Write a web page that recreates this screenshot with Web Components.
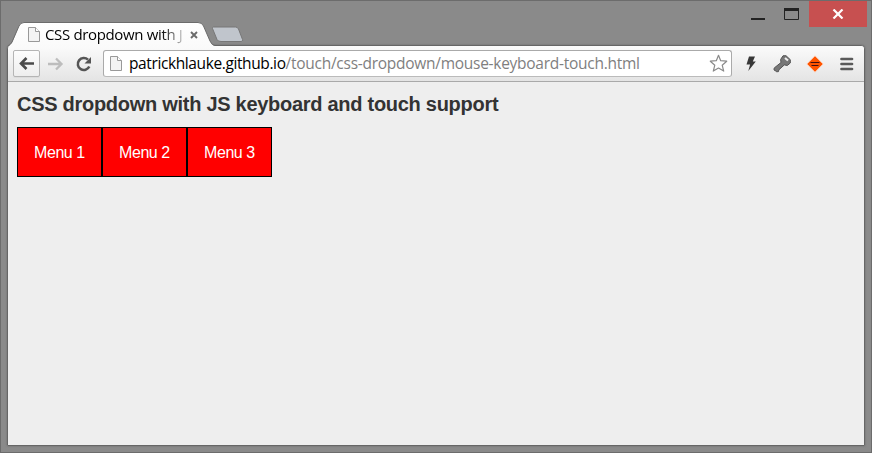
<!DOCTYPE html>
<html lang="en">
<head>
<meta charset="utf-8">
<title>CSS dropdown with JS keyboard and touch support</title>
<style>
html,body{margin:0;height:100%;overflow:hidden}
</style>
</head>
<body>
<browser-window>
  <browser-tab slot="tabs">CSS dropdown with J</browser-tab>
  <window-controls slot="controls"></window-controls>
  <browser-toolbar slot="toolbar"><address-bar slot="address" host="patrickhlauke.github.io" path="/touch/css-dropdown/mouse-keyboard-touch.html"></address-bar></browser-toolbar>
  <demo-page>
    <menu-item>Menu 1</menu-item><menu-item>Menu 2</menu-item><menu-item>Menu 3</menu-item>
  </demo-page>
</browser-window>
<script>
const define = (name, html, init) => {
  const template = document.createElement('template');
  template.innerHTML = html;
  customElements.define(name, class extends HTMLElement {
    constructor() {
      super();
      this.attachShadow({mode: 'open'}).append(template.content.cloneNode(true));
      if (init) init(this);
    }
  });
};
const pageIcon = `<svg width="12" height="15" viewBox="0 0 12 15"><path d="M.5.5h7l4 4v10H.5z" fill="#f3f3f3" stroke="#999"/><path d="M7.5.5v4h4" fill="#fff" stroke="#999"/></svg>`;

define('browser-window', `
<style>
:host{display:flex;flex-direction:column;box-sizing:border-box;width:872px;height:453px;border:1px solid #6c6c6c;background:#8a8a8a;padding:0 7px 7px}
.title{display:flex;height:44px;flex:none;justify-content:space-between;align-items:flex-start;margin-right:-3px}
.frame{flex:1;display:flex;flex-direction:column;box-sizing:border-box;margin:0 -1px;border:1px solid #666;border-radius:4px 4px 1px 1px;box-shadow:0 0 2px #555a;background:#eee;min-height:0;margin-bottom:-1px}
.tabs{display:flex;align-items:flex-start;padding-top:21px;z-index:1}
.new{margin-left:-5px;margin-top:4px}
</style>
<div class="title"><div class="tabs"><slot name="tabs"></slot>
<svg class="new" width="34" height="17" viewBox="0 0 34 17"><path d="M3.5 1h22q2 0 3 2l4 10.500q1 2-1.500 2H11q-3 0-4-2l-4.500-11q-.5-1 1-1.500z" fill="#c0c5cc" stroke="#777"/></svg></div>
<slot name="controls"></slot></div>
<div class="frame"><slot name="toolbar"></slot><slot></slot></div>`);

define('browser-tab', `
<style>
:host{display:grid;width:207px;height:25px;flex:none;font:15px "Open Sans","Noto Sans",sans-serif;letter-spacing:-.35px;color:#000}
.shape,.body{grid-area:1/1}
.body{display:flex;align-items:center;padding-left:20px;height:25px}
.label{margin-left:5px;width:138px;overflow:hidden;white-space:nowrap;line-height:24px;padding-bottom:1px;-webkit-mask-image:linear-gradient(90deg,#000 116px,transparent 144px);mask-image:linear-gradient(90deg,#000 116px,transparent 144px)}
.close{margin-left:7px}
</style>
<svg class="shape" width="207" height="25" viewBox="0 0 207 25"><defs><linearGradient id="g" x2="0" y2="1"><stop stop-color="#fff"/><stop offset="1" stop-color="#fafafa"/></linearGradient></defs>
<path d="M0 25Q2 23 4 21L11 4Q12.500.5 16 .5H190Q194 .5 195.500 4L202 19Q204 23.500 207 24V25z" fill="url(#g)"/><path d="M0 24Q2 23 4 20L11 4Q12.500.5 16 .5H190Q194 .5 195.500 4L202 19Q204 23.500 207 23.500" fill="none" stroke="#6c6c6c"/></svg>
<div class="body">${pageIcon}<span class="label"><slot></slot></span><svg class="close" width="8" height="8" viewBox="0 0 8 8"><path d="M1 1l6 6M7 1L1 7" stroke="#6b6b6b" stroke-width="1.900"/></svg></div>`);

define('window-controls', `
<style>
:host{display:flex;height:26px}
.min{margin-right:19px}.max{margin-right:10px}
.close{background:#c75050;width:58px;height:26px;display:flex;align-items:center;justify-content:center}
</style>
<svg class="min" width="14" height="20"><path d="M0 17h14v2H0z" fill="#222"/></svg>
<svg class="max" width="15" height="20"><path d="M.5 8.500h14v10H.5z" fill="none" stroke="#222"/><path d="M0 7h15v3H0z" fill="#222"/></svg>
<div class="close"><svg width="12" height="10" viewBox="0 0 12 10"><path d="M1.500.5l9 9M10.500.5l-9 9" stroke="#fff" stroke-width="2.200"/></svg></div>`);

define('browser-toolbar', `
<style>
:host{display:flex;align-items:center;box-sizing:border-box;height:36px;flex:none;border-bottom:1px solid #a9a9a9;border-radius:3px 3px 0 0;background:linear-gradient(#fbfbfb,#e4e4e4);padding-left:5px}
.back{display:flex;width:25px;height:25px;border:1px solid #b5b5b5;border-radius:2px;background:linear-gradient(#fdfdfd,#eee);box-shadow:0 1px #ccc6}
.forward{margin-left:8px}.reload{margin-left:12px}
.ext{display:flex;align-items:center}
</style>
<div class="back"><svg width="25" height="25" viewBox="0 0 25 25"><path d="M20 12.500H7M12.500 7L7 12.500l5.500 5.500" fill="none" stroke="#4b4b4b" stroke-width="2.600"/></svg></div>
<svg class="forward" width="16" height="14" viewBox="0 0 16 14"><path d="M0 7h13M8 1.500L13.500 7 8 12.500" fill="none" stroke="#bdbdbd" stroke-width="2.300"/></svg>
<svg class="reload" width="16" height="16" viewBox="0 0 16 16"><path d="M13.300 10.500A6 6 0 1 1 12 3.700" fill="none" stroke="#555" stroke-width="2.500"/><path d="M15 1v6.500H8.500z" fill="#555"/></svg>
<slot name="address"></slot>
<div class="ext">
<svg style="margin-left:13px" width="12" height="17" viewBox="0 0 12 17"><path d="M4 1.500h6L7.800 6.500h3L3.300 16l1.800-6.500H1.500z" fill="#383838"/></svg>
<svg style="margin-left:16px" width="19" height="18" viewBox="0 0 19 18"><path d="M10 .8l3-.1 4.300 4v3.300l-3 2.500-3-.6-5.500 5-.3 1.700-2 .2-.5-.8L1 15l.2-2L8 7.500l-.4-3z" fill="#777" stroke="#555" stroke-width="1"/><path d="M12 2.900l3 2.700" stroke="#eee" stroke-width="2"/></svg>
<svg style="margin-left:14px" width="18" height="18" viewBox="0 0 18 18"><path d="M9 .8l8.200 8.200L9 17.200.8 9z" fill="#ff5500" stroke="#ffe8dc" stroke-width=".7"/><path d="M4.500 7.500H13.500M5.500 10.500H12.500" stroke="#411" stroke-width="1.200"/></svg>
<svg style="margin-left:16px" width="14" height="14" viewBox="0 0 14 14"><path d="M1.500 2h10.500M1.500 7h10.500M1.500 12h10.500" stroke="#5a5a5a" stroke-width="2.700" stroke-linecap="round"/></svg>
</div>`);

define('address-bar', `
<style>
:host{display:flex;align-items:center;box-sizing:border-box;width:629px;height:27px;margin-left:11px;border:1px solid #aaa;border-bottom-color:#bbb;border-radius:3px;background:#fff;padding:0 3px 0 6px;font:15.500px "Open Sans","Noto Sans",sans-serif;color:#000;white-space:nowrap}
.text{margin-left:7px;flex:1;line-height:24px;padding-bottom:1px}
.host{letter-spacing:-.39px}
.path{color:#7f7f7f;letter-spacing:-.27px}
</style>${pageIcon}<span class="text"><span class="host"></span><span class="path"></span></span>
<svg width="19" height="19" viewBox="0 0 19 19"><path d="M9.500 1.300l2.200 5.400 6 .5-4.500 4 1.500 5.900-5.200-3-5.200 3 1.500-5.900-4.500-4 6-.5z" fill="#fff" stroke="#8a8a8a" stroke-width="1.200" stroke-linejoin="round"/></svg>`, el => {
  el.shadowRoot.querySelector('.host').textContent = el.getAttribute('host');
  el.shadowRoot.querySelector('.path').textContent = el.getAttribute('path');
});

define('demo-page', `
<style>
:host{display:block;flex:1;background:#eee;padding:0 9px;font-family:"Liberation Sans",Arial,sans-serif;color:#333}
h1{font-size:20px;line-height:24px;margin:10px 0 11px;letter-spacing:-.28px}
nav{display:flex}
</style><h1>CSS dropdown with JS keyboard and touch support</h1><nav><slot></slot></nav>`);

define('menu-item', `
<style>
:host{display:flex;align-items:center;box-sizing:border-box;width:85px;height:50px;padding:2px 0 0 16px;border:1px solid #000;background:#f00;color:#fff;font-size:16px;letter-spacing:-.42px;white-space:nowrap}
</style><slot></slot>`);
</script>
</body>
</html>
